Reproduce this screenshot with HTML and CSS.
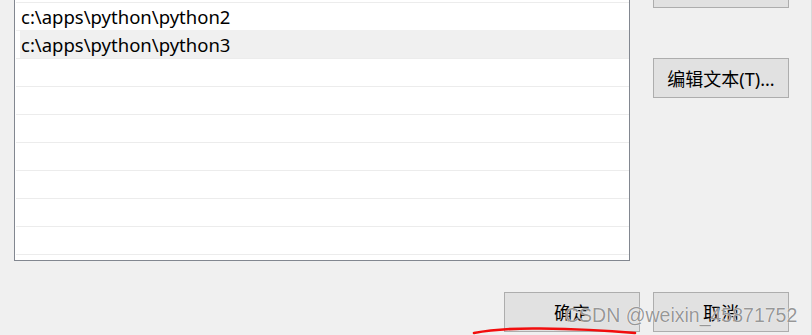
FILE: index.html
```html
<!DOCTYPE html>
<html lang="zh-CN">

<head>
	<meta charset="UTF-8">
	<meta name="viewport" content="width=device-width, initial-scale=1.0">
	<title>编辑环境变量</title>
	<link rel="stylesheet" href="styles.css">
</head>

<body>

	<div class="dialog">
		<div class="main">
			<div class="list">
				<div class="row"><span class="cell">c:\apps\python\python2</span></div>
				<div class="row selected"><span class="cell">c:\apps\python\python3</span></div>
				<div class="row"></div>
				<div class="row"></div>
				<div class="row"></div>
				<div class="row"></div>
				<div class="row"></div>
				<div class="row"></div>
				<div class="row"></div>
				<div class="row"></div>
			</div>

			<div class="side">
				<button class="btn" aria-label="下移"></button>
				<button class="btn">编辑文本(T)...</button>
			</div>
		</div>

		<div class="footer">
			<button class="btn">确定</button>
			<button class="btn">取消</button>
		</div>

		<!-- red pen mark under the OK button -->
		<svg class="scribble" width="812" height="335" viewBox="0 0 812 335">
			<path d="M474 333 Q 500 328 540 328.5 Q 590 329 635 333" fill="none" stroke="#f20d0d" stroke-width="2.6" stroke-linecap="round" />
		</svg>

		<div class="watermark">CSDN @weixin_45871752</div>
	</div>

</body>

</html>
```

FILE: styles.css
```css
body {
	margin: 0;
	background-color: #f0f0f0;
	font-family: "Noto Sans", "Noto Sans CJK SC", sans-serif;
	overflow: hidden;
}

.dialog {
	position: relative;
	box-sizing: border-box;
	width: 812px;
	height: 335px;
	border-right: 1px solid #d9d9d9;
	overflow: hidden;
}

.main {
	display: flex;
	gap: 23px;
	padding-left: 14px;
}

.list {
	box-sizing: border-box;
	width: 616px;
	height: 261px;
	padding-top: 2px;
	background-color: #fff;
	border: 1px solid #828790;
	border-top: none;
	overflow: hidden;
}

.row {
	display: flex;
	box-sizing: border-box;
	height: 28px;
	margin-left: 1px;
	border-top: 1px solid #ececec;
}

.cell {
	flex: 1;
	padding: 1px 0 0 5px;
	font-size: 18.5px;
	line-height: 26px;
	color: #000;
	white-space: nowrap;
}

.selected {
	border-top-color: #f0f0f0;
}

.selected .cell {
	margin-left: 4px;
	padding-left: 1px;
	background-color: #f0f0f0;
}

.side {
	display: flex;
	flex-direction: column;
	gap: 50px;
	margin-top: -32px;
}

.btn {
	box-sizing: border-box;
	width: 136px;
	height: 40px;
	padding: 0;
	background-color: #e1e1e1;
	border: 1px solid #adadad;
	border-radius: 0;
	font-family: "Noto Sans", "Noto Sans CJK SC", sans-serif;
	font-size: 18px;
	color: #000;
}

.footer {
	display: flex;
	justify-content: flex-end;
	gap: 13px;
	margin-top: 31px;
	padding-right: 22px;
}

.scribble {
	position: absolute;
	left: 0;
	top: 0;
	pointer-events: none;
}

.watermark {
	position: absolute;
	left: 565px;
	top: 304px;
	font-family: "Liberation Sans", Arial, sans-serif;
	font-size: 19.5px;
	color: rgba(105, 105, 105, 0.7);
	text-shadow: 0 0 1px rgba(255, 255, 255, 0.9), 0 0 1px rgba(255, 255, 255, 0.9);
	white-space: nowrap;
	pointer-events: none;
}
```
